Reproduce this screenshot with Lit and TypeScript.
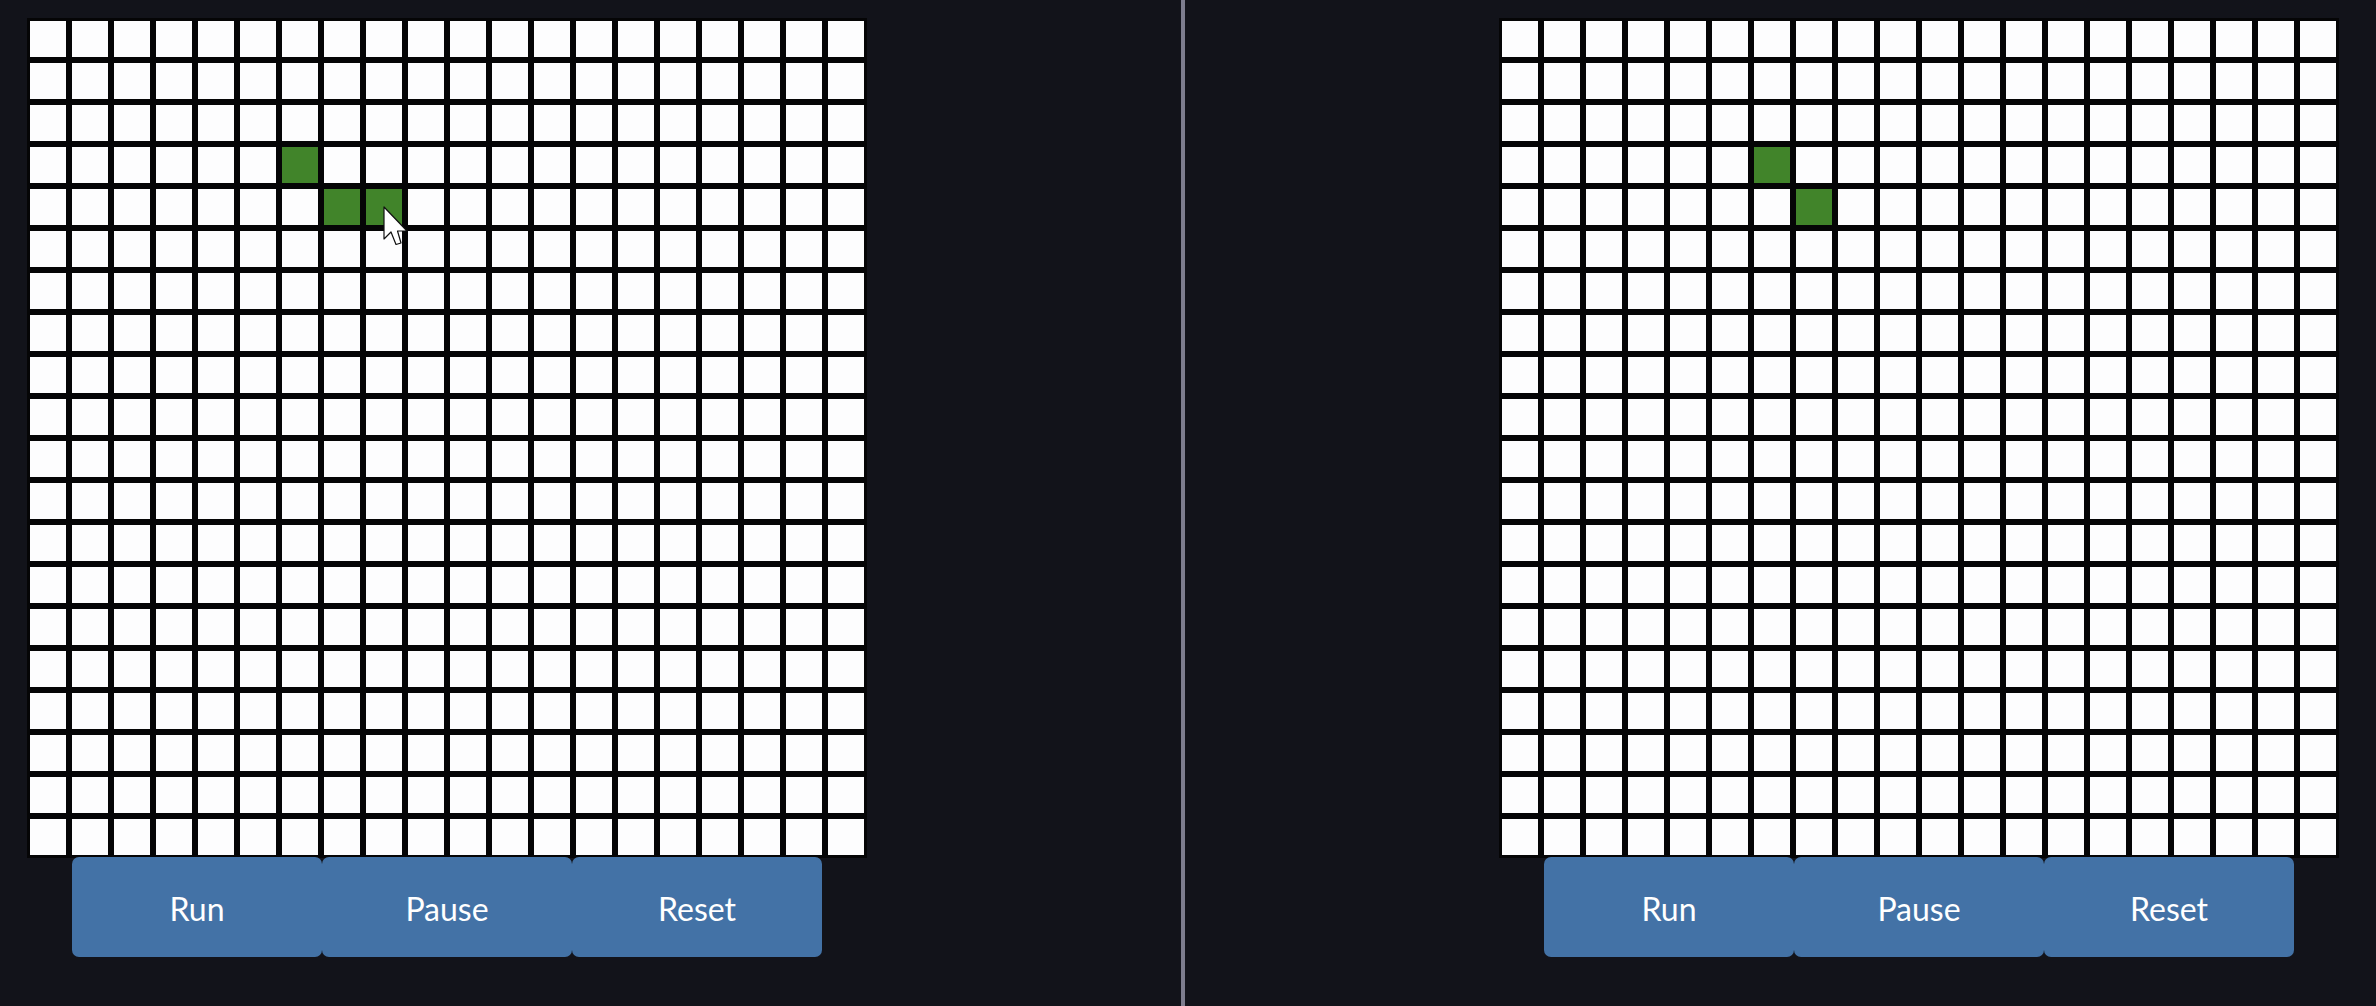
import { LitElement, html, css, svg } from "lit";
import { customElement } from "lit/decorators.js";

const SIZE = 20;

@customElement("app-board")
class AppBoard extends LitElement {
  static properties = { live: { type: Array }, pointer: { type: Boolean } };
  live: string[] = [];
  pointer = false;

  static styles = css`
    :host {
      display: flex;
      flex-direction: column;
      align-items: center;
      position: relative;
      width: 840px;
    }
    .grid {
      display: grid;
      grid-template-columns: repeat(20, 42px);
      grid-auto-rows: 42px;
    }
    .cell {
      box-sizing: border-box;
      border: 3px solid #050506;
      background: #fdfdfe;
    }
    .cell.on {
      background: #41842a;
    }
    .controls {
      display: flex;
      margin-top: -1px;
    }
    button {
      width: 250px;
      height: 100px;
      border: 0;
      border-radius: 7px;
      padding: 3px 0 0;
      background: #4372a6;
      color: #fff;
      font: 400 32px "Lato", "Open Sans", sans-serif;
    }
    .pointer {
      position: absolute;
      left: 356px;
      top: 188px;
      width: 26px;
      height: 40px;
    }
  `;

  render() {
    const cells = [];
    for (let r = 0; r < SIZE; r++) {
      for (let c = 0; c < SIZE; c++) {
        cells.push(html`<div class="cell ${this.live.includes(`${r},${c}`) ? "on" : ""}"></div>`);
      }
    }
    return html`
      <div class="grid">${cells}</div>
      <div class="controls">
        <button>Run</button><button>Pause</button><button>Reset</button>
      </div>
      ${this.pointer
        ? svg`<svg class="pointer" viewBox="0 0 26 40">
            <path d="M1 1 L1 33 L8 26 L13 38.5 L18 37 L14.5 25 L24 25 Z" fill="#fff" stroke="#111" stroke-width="1.2" stroke-linejoin="round"/>
          </svg>`
        : ""}
    `;
  }
}

@customElement("app-root")
class AppRoot extends LitElement {
  static styles = css`
    :host {
      display: flex;
      width: 100%;
      height: 1006px;
      background-color: #12131a;
    }
    .pane {
      flex: 1 1 0;
      display: flex;
      align-items: flex-start;
      box-sizing: border-box;
      padding-top: 18px;
    }
    .pane.left {
      padding-left: 27px;
      border-right: 4px solid #7d7d8e;
    }
    .pane.right {
      justify-content: flex-end;
      padding-right: 37px;
    }
  `;

  render() {
    return html`
      <div class="pane left">
        <app-board .live=${["3,6", "4,7", "4,8"]} .pointer=${true}></app-board>
      </div>
      <div class="pane right">
        <app-board .live=${["3,6", "4,7"]}></app-board>
      </div>
    `;
  }
}
